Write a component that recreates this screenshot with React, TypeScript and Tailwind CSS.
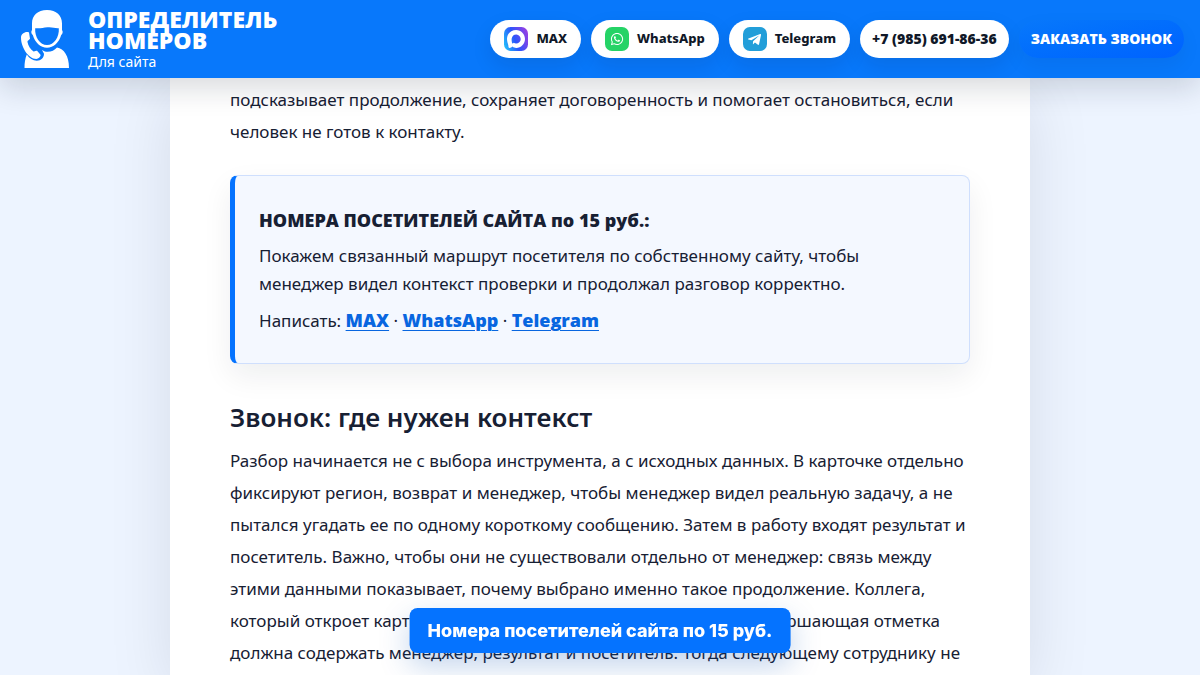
import React from 'react';
import { FaTelegramPlane, FaWhatsapp } from 'react-icons/fa';

const MaxIcon: React.FC = () => (
  <svg viewBox="0 0 24 24" className="h-6 w-6 shrink-0" aria-hidden="true">
    <defs>
      <linearGradient id="maxFill" x1="0" y1="0.7" x2="1" y2="0.3">
        <stop offset="0" stopColor="#22b8fb" />
        <stop offset="0.45" stopColor="#2b55fb" />
        <stop offset="1" stopColor="#9440e4" />
      </linearGradient>
    </defs>
    <rect width="24" height="24" rx="6.5" fill="url(#maxFill)" />
    <path
      fill="#fff"
      fillRule="evenodd"
      d="M12.3 20.9c-1.7 0-2.5-.3-3.9-1.3-.9 1.2-3.7 2.1-3.9.5 0-1.2-.3-2.2-.6-3.3C3.5 15.4 3 13.9 3 11.8 3 6.7 7.2 3 12.1 3c5 0 8.9 4 8.9 9s-4 8.900-8.700 8.900zm.1-13.500c-2.400-.1-4.300 1.500-4.700 4.100-.3 2.200.3 4.900.8 5 .3.100.9-.4 1.300-.8.6.4 1.400.8 2.200.800 2.500.1 4.600-1.800 4.700-4.300.1-2.500-1.800-4.600-4.300-4.800z"
    />
  </svg>
);

const CallerLogo: React.FC = () => (
  <svg viewBox="0 0 50 60" className="h-[60px] w-[50px] shrink-0" aria-hidden="true">
    <path
      fill="#fff"
      fillRule="evenodd"
      d="M27 1c9.500 0 15 5.500 15 13.500V21c1.200 1.200.8 4-.8 5C39 33.500 33.500 38.800 27 38.800S15 33.500 12.800 26c-1.600-1-2-3.800-.8-5v-6.500C12 6.500 17.500 1 27 1zM15.200 19.200C14.500 28 20 36 27 36s12.500-8 11.800-16.800c-4 .3-6.500-1.400-11.300-.9-4.500.500-8 1.400-12.300.9z"
    />
    <path
      fill="#fff"
      d="M3 24.500c1.500-1.400 4.500-2 6-1l1 6.300c-.8 1.300-2.200 1.600-2.600 3 .8 4.200 3.200 7.700 6.200 9.600 1.400.1 2.200-.8 3.500-.7l3.600 4.400c-.5 2.200-2.200 3.700-4.400 4C8 49.500.9 38 1 28.500c0-1.700.7-2.900 2-4z"
    />
    <path
      fill="#fff"
      d="M6.800 45.500c2.700 4 6 6.200 10 6.200 4.200-.2 7.200-3 7.200-7l-2-3.700c2 1.300 3.700 1.800 5.600 1.800 3.900 0 7-1.500 9.400-4.300 7 1.500 12 8 12 20.500H4.500c0-5 .6-9.500 2.300-13.500z"
    />
  </svg>
);

interface MessengerLinkProps {
  href: string;
  label: string;
  icon: React.ReactNode;
}

const MessengerLink: React.FC<MessengerLinkProps> = ({ href, label, icon }) => (
  <a
    href={href}
    className="flex h-[38px] items-center gap-2 whitespace-nowrap rounded-full bg-white px-[14px] text-[13px] font-extrabold text-[#101828] shadow-[0_8px_20px_rgba(15,23,42,0.1)]"
  >
    {icon}
    {label}
  </a>
);

const Header: React.FC = () => (
  <header className="relative z-10 flex h-[78px] items-center justify-between bg-[#0878fb] pl-5 pr-4 shadow-[0_10px_30px_rgba(15,23,42,0.16)]">
    <a href="#top" className="flex items-center gap-[18px] text-white">
      <CallerLogo />
      <span className="flex flex-col pt-1">
        <span className="font-['Open_Sans',sans-serif] text-[23px] font-extrabold uppercase leading-[21px]">
          Определитель
          <br />
          номеров
        </span>
        <span className="text-sm leading-[22px]">Для сайта</span>
      </span>
    </a>
    <nav className="flex items-center gap-[10px]">
      <MessengerLink href="#max" label="MAX" icon={<MaxIcon />} />
      <MessengerLink
        href="#whatsapp"
        label="WhatsApp"
        icon={
          <span className="flex h-6 w-6 items-center justify-center rounded-[7px] bg-[#25d366] text-white">
            <FaWhatsapp size={14} />
          </span>
        }
      />
      <MessengerLink
        href="#telegram"
        label="Telegram"
        icon={
          <span className="flex h-6 w-6 items-center justify-center rounded-[7px] bg-[#229ed9] text-white">
            <FaTelegramPlane size={15} />
          </span>
        }
      />
      <a
        href="tel:+79856918636"
        className="flex h-[38px] items-center whitespace-nowrap rounded-full bg-white px-3 font-['Open_Sans',sans-serif] text-sm font-extrabold text-[#101828] shadow-[0_8px_20px_rgba(15,23,42,0.1)]"
      >
        +7 (985) 691-86-36
      </a>
      <button
        type="button"
        className="h-[38px] whitespace-nowrap rounded-full bg-linear-to-br from-[#0878fb] to-[#0062ff] px-3 font-['Open_Sans',sans-serif] text-sm font-extrabold uppercase text-white shadow-[0_8px_20px_rgba(15,23,42,0.06)]"
      >
        Заказать звонок
      </button>
    </nav>
  </header>
);

const linkClass = "font-['Open_Sans',sans-serif] text-[18px] font-extrabold text-[#0866e0] underline decoration-1 underline-offset-3";

const Promo: React.FC = () => (
  <aside className="mt-[27px] flex flex-col gap-2 rounded-lg border border-l-[5px] border-[#cfdffd] border-l-[#0573ff] bg-[#f4f8ff] px-6 pb-7 pt-[30px] text-[17px] leading-7 shadow-[0_12px_30px_rgba(15,23,42,0.07)]">
    <strong className="font-['Open_Sans',sans-serif] text-[18px] font-extrabold leading-7">НОМЕРА ПОСЕТИТЕЛЕЙ САЙТА по 15 руб.:</strong>
    <p>
      Покажем связанный маршрут посетителя по собственному сайту, чтобы
      <br />
      менеджер видел контекст проверки и продолжал разговор корректно.
    </p>
    <p>
      Написать: <a href="#max" className={linkClass}>MAX</a>
      {' · '}
      <a href="#whatsapp" className={linkClass}>WhatsApp</a>
      {' · '}
      <a href="#telegram" className={linkClass}>Telegram</a>
    </p>
  </aside>
);

const App: React.FC = () => {
  return (
    <div id="top" className="flex min-h-screen flex-col overflow-x-hidden bg-[#edf4ff] font-['Noto_Sans',sans-serif] text-[#172033]">
      <Header />
      <main className="mx-auto w-full max-w-[860px] grow bg-white px-[60px] pt-[6px] shadow-[0_18px_60px_rgba(15,23,42,0.1)]">
        <p className="text-[17px] leading-8">
          подсказывает продолжение, сохраняет договоренность и помогает остановиться, если
          <br />
          человек не готов к контакту.
        </p>
        <Promo />
        <h2 className="mt-[33px] text-[26px] font-semibold leading-10">Звонок: где нужен контекст</h2>
        <p className="mt-[8px] text-[17px] leading-8">
          Разбор начинается не с выбора инструмента, а с исходных данных. В карточке отдельно
          <br />
          фиксируют регион, возврат и менеджер, чтобы менеджер видел реальную задачу, а не
          <br />
          пытался угадать ее по одному короткому сообщению. Затем в работу входят результат и
          <br />
          посетитель. Важно, чтобы они не существовали отдельно от менеджер: связь между
          <br />
          этими данными показывает, почему выбрано именно такое продолжение. Коллега,
          <br />
          который откроет карточку позже, сразу увидит причину шага. Завершающая отметка
          <br />
          должна содержать менеджер, результат и посетитель. Тогда следующему сотруднику не
        </p>
      </main>
      <button
        type="button"
        className="fixed bottom-[22px] left-1/2 z-20 h-[45px] -translate-x-1/2 whitespace-nowrap rounded-lg bg-[#0573ff] px-[18px] font-['Inter',sans-serif] text-[18px] font-extrabold text-white shadow-[0_12px_30px_rgba(8,80,180,0.25)]"
      >
        Номера посетителей сайта по 15 руб.
      </button>
    </div>
  );
};

export default App;
